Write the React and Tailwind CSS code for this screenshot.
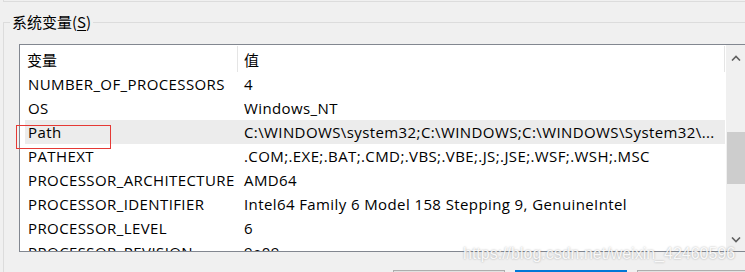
import React from 'react';

const rows = [
    { name: 'NUMBER_OF_PROCESSORS', value: '4' },
    { name: 'OS', value: 'Windows_NT' },
    { name: 'Path', value: 'C:\\WINDOWS\\system32;C:\\WINDOWS;C:\\WINDOWS\\System32\\...', selected: true },
    { name: 'PATHEXT', value: '.COM;.EXE;.BAT;.CMD;.VBS;.VBE;.JS;.JSE;.WSF;.WSH;.MSC' },
    { name: 'PROCESSOR_ARCHITECTURE', value: 'AMD64' },
    { name: 'PROCESSOR_IDENTIFIER', value: 'Intel64 Family 6 Model 158 Stepping 9, GenuineIntel' },
    { name: 'PROCESSOR_LEVEL', value: '6' },
    { name: 'PROCESSOR_REVISION', value: '9e09' },
];

const ui = "font-['Open_Sans','Noto_Sans_CJK_SC',sans-serif]";
const cjk = "font-['Noto_Sans_CJK_SC',sans-serif]";

const Chevron = ({ down }) => (
    <svg width="10" height="6" viewBox="0 0 10 6" className={down ? 'rotate-180' : ''}>
        <path d="M1 5.5 L5 1.5 L9 5.5" fill="none" stroke="#606060" strokeWidth="1.6" />
    </svg>
);

const ScrollBar = () => (
    <div className="w-[22px] shrink-0 bg-[#f0f0f0] flex flex-col">
        <div className="h-[25px] flex items-center justify-center pr-[2px]">
            <Chevron />
        </div>
        <div className="flex-1">
            <div className="mt-[62px] ml-[1px] h-[52px] bg-[#cdcdcd]" />
        </div>
        <div className="h-[23px] flex items-center justify-center pr-[2px]">
            <Chevron down />
        </div>
    </div>
);

const VariableList = () => (
    <div className="w-[730px] h-[208px] bg-white border-l border-t border-b border-[#828790] flex">
        <div className="w-[706px] shrink-0 overflow-hidden">
            {/* column header */}
            <div className="h-[27px] flex items-center text-[15px] text-black">
                <div className={`w-[217px] pl-[7px] pt-[3px] ${cjk}`}>变量</div>
                <div className="w-px h-[26px] bg-[#e5e5e5]" />
                <div className={`w-[486px] pl-[6px] pt-[3px] ${cjk}`}>值</div>
                <div className="w-px h-[26px] bg-[#e5e5e5]" />
            </div>
            {rows.map((row) => (
                <div
                    key={row.name}
                    className={`ml-[5px] w-[700px] h-[24px] grid grid-cols-[216px_1fr] items-center text-[15px] leading-[20px] tracking-[0.4px] text-black whitespace-nowrap ${
                        row.selected ? 'bg-[#ececec]' : ''
                    }`}
                >
                    <div className="pl-[3px]">{row.name}</div>
                    <div className="pl-[3px]">{row.value}</div>
                </div>
            ))}
        </div>
        <ScrollBar />
    </div>
);

const App = () => {
    return (
        <div className={`relative w-[745px] h-[272px] overflow-hidden bg-[#f0f0f0] ${ui}`}>
            <div className="ml-[3px] h-[2px] border-l border-b border-[#dcdcdc]" />

            <fieldset className="mt-[10px] ml-[3px] border-l border-t border-[#dcdcdc] h-[300px]">
                <legend className={`ml-[6px] px-[2px] text-[15px] leading-[20px] text-black ${cjk}`}>
                    系统变量(<span className="underline underline-offset-2">S</span>)
                </legend>

                <div className="mt-[12px] ml-[15px]">
                    <VariableList />
                </div>

                <div className="mt-[18px] pl-[389px] flex gap-[10px]">
                    <div className="w-[112px] h-[30px] shrink-0 bg-[#e1e1e1] border border-[#adadad]" />
                    <div className="w-[112px] h-[30px] shrink-0 bg-[#e1e1e1] border-2 border-[#0078d7]" />
                    <div className="w-[112px] h-[30px] shrink-0 bg-[#e1e1e1] border border-[#adadad]" />
                </div>
            </fieldset>

            {/* annotation box around Path */}
            <div className="absolute left-[16px] top-[125px] w-[95px] h-[24px] border border-[#e53935]" />

            {/* watermark */}
            <div className="absolute left-[463px] top-[243px] font-['Liberation_Sans',sans-serif] text-[16px] leading-[22px] text-white/90 [text-shadow:0_0_2px_rgba(0,0,0,0.35)] whitespace-nowrap">
                https://blog.csdn.net/weixin_42460596
            </div>
        </div>
    );
};

export default App;
